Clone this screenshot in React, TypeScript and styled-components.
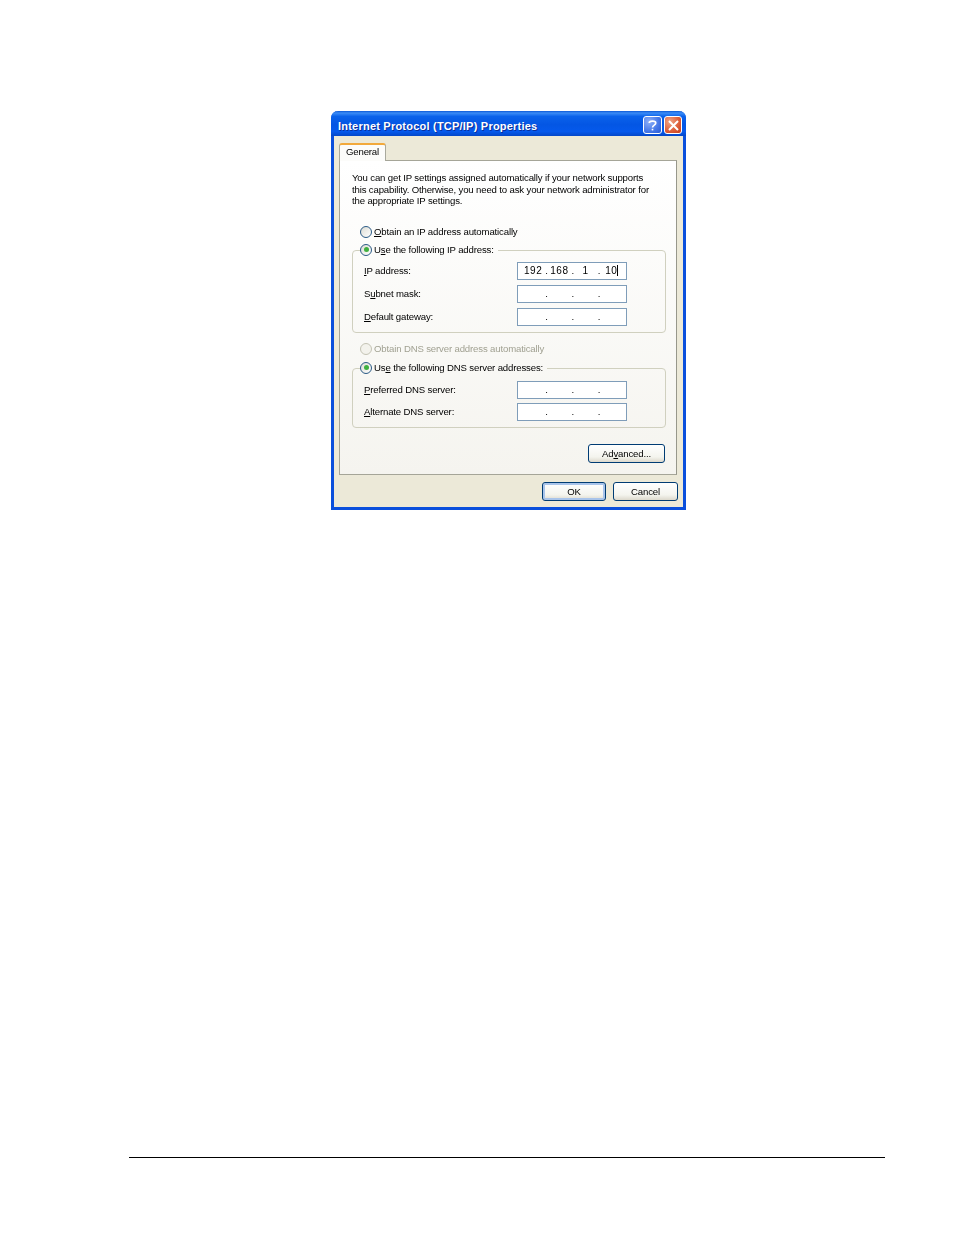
import React from "react";
import styled, { createGlobalStyle } from "styled-components";

const Global = createGlobalStyle`
  html, body { margin: 0; padding: 0; background: #fff; }
  body { font-family: "Liberation Sans", Arial, sans-serif; color: #000; }
`;

const Page = styled.div`
  width: 954px;
  height: 1235px;
  padding-top: 111px;
  box-sizing: border-box;
  display: flex;
  flex-direction: column;
  overflow: hidden;
`;

const Dialog = styled.div`
  width: 355px;
  height: 399px;
  margin-left: 331px;
  box-sizing: border-box;
  display: flex;
  flex-direction: column;
  background: #ece9d8;
  border: 3px solid #0a4fdc;
  border-top: 0;
  border-radius: 7px 7px 0 0;
  font-size: 9.6px;
  letter-spacing: -0.15px;
  filter: blur(0.35px);
`;

const TitleBar = styled.div`
  height: 25px;
  margin: 0 -3px;
  padding: 0 4px 0 7px;
  flex: none;
  display: flex;
  align-items: center;
  gap: 2px;
  border-radius: 7px 7px 0 0;
  background: linear-gradient(180deg, #0a57d6 0%, #3b8cf6 8%, #0a62ea 22%, #0456e4 55%, #0559ec 82%, #0447c8 100%);
`;

const Title = styled.div`
  flex: 1;
  padding-top: 4px;
  color: #fff;
  font-size: 11px;
  font-weight: 700;
  letter-spacing: 0.22px;
  text-shadow: 1px 1px 0 #0a2f9c;
`;

const CaptionButton = styled.div<{ $close?: boolean }>`
  width: ${(p) => (p.$close ? 18 : 19)}px;
  height: 18px;
  margin-top: 3px;
  box-sizing: border-box;
  display: flex;
  align-items: center;
  justify-content: center;
  border: 1px solid #fff;
  border-radius: 3px;
  background: ${(p) =>
    p.$close
      ? "radial-gradient(circle at 30% 30%, #f0a587, #dc5c38 60%, #c23c1a)"
      : "radial-gradient(circle at 30% 30%, #8db0f8, #4477e8 60%, #2a5ad4)"};
`;

const Body = styled.div`
  flex: 1;
  display: flex;
  flex-direction: column;
  padding: 7px 5px 0;
`;

const TabStrip = styled.div`
  display: flex;
  margin-bottom: -1px;
  position: relative;
  z-index: 1;
`;

const Tab = styled.div`
  width: 47px;
  height: 18px;
  box-sizing: border-box;
  text-align: center;
  line-height: 13px;
  border: 1px solid #a9a99c;
  border-top: 2px solid #f2a93b;
  border-bottom: 0;
  border-radius: 3px 3px 0 0;
  background: #fcfcfa;
`;

const Panel = styled.div`
  width: 338px;
  height: 315px;
  box-sizing: border-box;
  padding: 11px 10px 0 12px;
  border: 1px solid #a5a598;
  border-right-color: #97978b;
  background: linear-gradient(180deg, #ffffff 0%, #f5f4ef 100%);
  display: flex;
  flex-direction: column;
`;

const Intro = styled.p`
  margin: 0 0 18px;
  line-height: 11.5px;
  width: 305px;
`;

const RadioRow = styled.div<{ $disabled?: boolean; $top?: number }>`
  height: 14px;
  display: flex;
  align-items: center;
  gap: 2px;
  margin: ${(p) => p.$top ?? 0}px 0 0 8px;
  white-space: nowrap;
  color: ${(p) => (p.$disabled ? "#a1a192" : "#000")};
`;

const RadioDisc = styled.span<{ $checked?: boolean; $disabled?: boolean }>`
  width: 12px;
  height: 12px;
  flex: none;
  box-sizing: border-box;
  display: flex;
  align-items: center;
  justify-content: center;
  border-radius: 50%;
  border: 1px solid ${(p) => (p.$disabled ? "#c4c3b4" : "#2a5a85")};
  background: ${(p) => (p.$disabled ? "#f3f2ec" : "linear-gradient(135deg, #dcdcd4, #ffffff)")};
  &::after {
    content: "";
    display: ${(p) => (p.$checked ? "block" : "none")};
    width: 5px;
    height: 5px;
    border-radius: 50%;
    background: #3fb03f;
  }
`;

const Group = styled.fieldset<{ $top: number; $pad: number }>`
  margin: ${(p) => p.$top}px 0 0;
  padding: 0 38px ${(p) => p.$pad}px 11px;
  min-width: 0;
  border: 1px solid #d0d0bf;
  border-radius: 4px;
  display: flex;
  flex-direction: column;
`;

const Legend = styled.legend`
  margin-left: -4px;
  padding: 0 4px 2px 0;
  box-sizing: border-box;
  height: 14px;
  display: flex;
  align-items: center;
  gap: 2px;
  white-space: nowrap;
`;

const Rows = styled.div<{ $top: number; $gap: number }>`
  display: flex;
  flex-direction: column;
  margin-top: ${(p) => p.$top}px;
  gap: ${(p) => p.$gap}px;
`;

const FieldRow = styled.div`
  display: flex;
  align-items: center;
  justify-content: space-between;
`;

const IpBox = styled.div`
  width: 110px;
  height: 18px;
  box-sizing: border-box;
  padding: 0 2px 0 3px;
  display: flex;
  align-items: center;
  border: 1px solid #7f9db9;
  background: #fff;
`;

const Octet = styled.span`
  flex: 1;
  text-align: center;
  font-size: 10px;
  letter-spacing: 0.5px;
`;

const Dot = styled.span`
  width: 2px;
  text-align: center;
`;

const Caret = styled.span`
  display: inline-block;
  width: 1px;
  height: 11px;
  background: #000;
  vertical-align: -2px;
`;

const AdvancedRow = styled.div`
  display: flex;
  justify-content: flex-end;
  margin: 16px 0 0;
  padding-right: 1px;
`;

const Button = styled.div<{ $w: number; $default?: boolean }>`
  width: ${(p) => p.$w}px;
  height: 19px;
  box-sizing: border-box;
  display: flex;
  align-items: center;
  justify-content: center;
  border: 1px solid #003c74;
  border-radius: 3px;
  background: linear-gradient(180deg, #ffffff 0%, #f4f4ee 70%, #dcd8cc 100%);
  box-shadow: ${(p) => (p.$default ? "inset 0 0 0 2px #a9c4ea" : "none")};
`;

const Actions = styled.div`
  display: flex;
  justify-content: flex-end;
  gap: 7px;
  margin-top: 7px;
  width: 339px;
`;

const Rule = styled.div`
  width: 756px;
  height: 1px;
  margin: 647px 0 0 129px;
  background: #000;
`;

function Ip({ value }: { value?: string[] }) {
  const v = value ?? ["", "", "", ""];
  return (
    <IpBox>
      <Octet>{v[0]}</Octet>
      <Dot>.</Dot>
      <Octet>{v[1]}</Octet>
      <Dot>.</Dot>
      <Octet>{v[2]}</Octet>
      <Dot>.</Dot>
      <Octet>
        {v[3]}
        {value && <Caret />}
      </Octet>
    </IpBox>
  );
}

export default function App() {
  return (
    <Page>
      <Global />
      <Dialog>
        <TitleBar>
          <Title>Internet Protocol (TCP/IP) Properties</Title>
          <CaptionButton>
            <svg width="9" height="13" viewBox="0 0 11 14" fill="none">
              <path d="M1.5 4 C1.5 0.8 9.5 0.8 9.5 4 C9.5 6.5 5.5 6.5 5.5 9.5" stroke="#fff" strokeWidth="2" />
              <rect x="4.5" y="11" width="2" height="2" fill="#fff" />
            </svg>
          </CaptionButton>
          <CaptionButton $close>
            <svg width="11" height="11" viewBox="0 0 11 11">
              <path d="M1 1 L10 10 M10 1 L1 10" stroke="#fff" strokeWidth="2" />
            </svg>
          </CaptionButton>
        </TitleBar>
        <Body>
          <TabStrip>
            <Tab>General</Tab>
          </TabStrip>
          <Panel>
            <Intro>
              You can get IP settings assigned automatically if your network supports this capability. Otherwise, you
              need to ask your network administrator for the appropriate IP settings.
            </Intro>
            <RadioRow>
              <RadioDisc />
              <span>
                <u>O</u>btain an IP address automatically
              </span>
            </RadioRow>
            <Group $top={5} $pad={6}>
              <Legend>
                <RadioDisc $checked />
                <span>
                  U<u>s</u>e the following IP address:
                </span>
              </Legend>
              <Rows $top={4} $gap={5}>
                <FieldRow>
                  <span>
                    <u>I</u>P address:
                  </span>
                  <Ip value={["192", "168", "1", "10"]} />
                </FieldRow>
                <FieldRow>
                  <span>
                    S<u>u</u>bnet mask:
                  </span>
                  <Ip />
                </FieldRow>
                <FieldRow>
                  <span>
                    <u>D</u>efault gateway:
                  </span>
                  <Ip />
                </FieldRow>
              </Rows>
            </Group>
            <RadioRow $disabled $top={9}>
              <RadioDisc $disabled />
              <span>Obtain DNS server address automatically</span>
            </RadioRow>
            <Group $top={6} $pad={6}>
              <Legend>
                <RadioDisc $checked />
                <span>
                  Us<u>e</u> the following DNS server addresses:
                </span>
              </Legend>
              <Rows $top={5} $gap={4}>
                <FieldRow>
                  <span>
                    <u>P</u>referred DNS server:
                  </span>
                  <Ip />
                </FieldRow>
                <FieldRow>
                  <span>
                    <u>A</u>lternate DNS server:
                  </span>
                  <Ip />
                </FieldRow>
              </Rows>
            </Group>
            <AdvancedRow>
              <Button $w={77}>
                <span>
                  Ad<u>v</u>anced...
                </span>
              </Button>
            </AdvancedRow>
          </Panel>
          <Actions>
            <Button $w={64} $default>
              OK
            </Button>
            <Button $w={65}>Cancel</Button>
          </Actions>
        </Body>
      </Dialog>
      <Rule />
    </Page>
  );
}
